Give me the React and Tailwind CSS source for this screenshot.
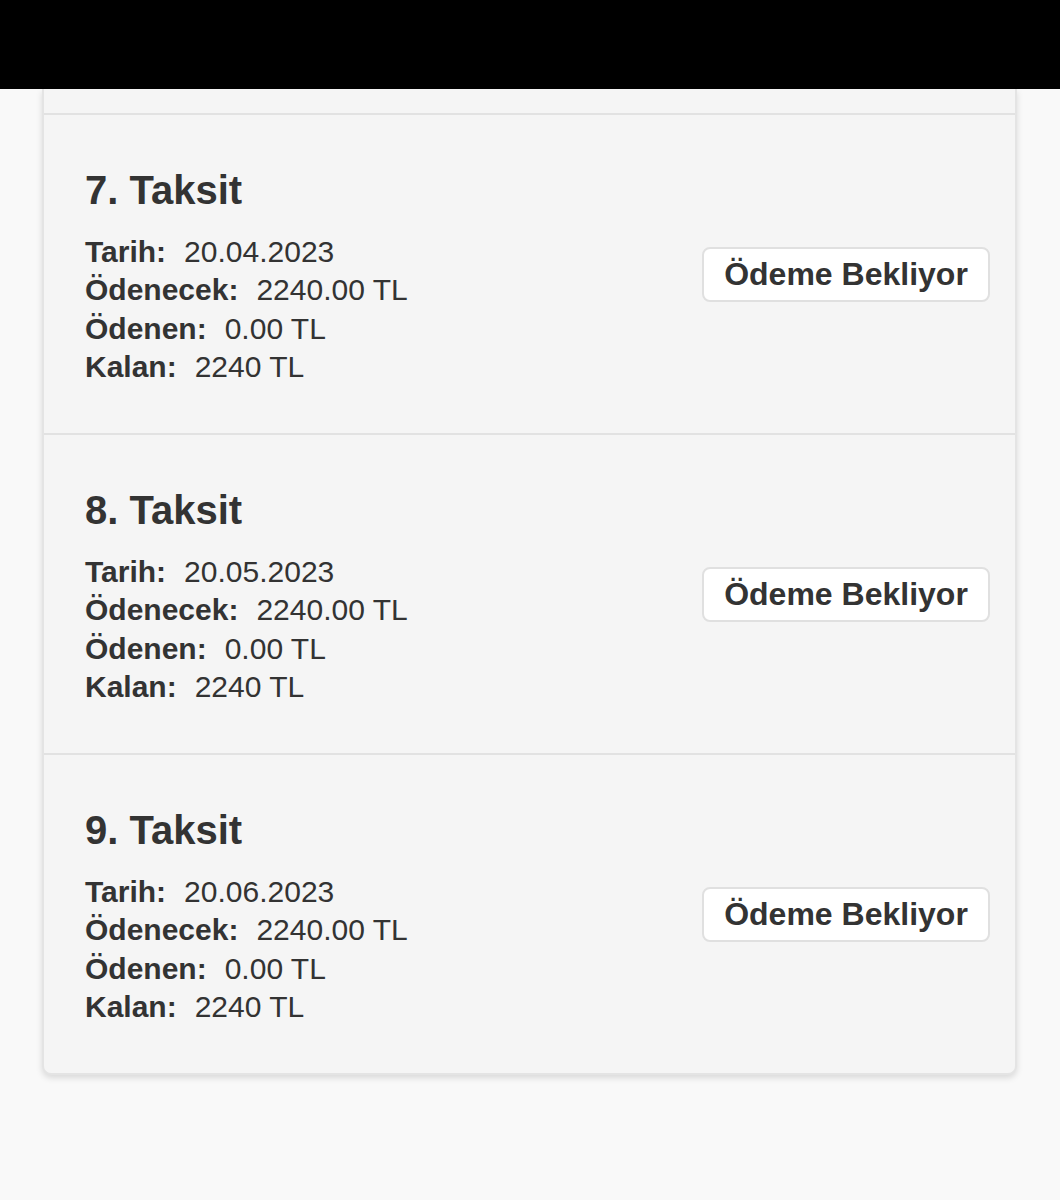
import React from "react";

const taksitler = [
  { no: 7, tarih: "20.04.2023" },
  { no: 8, tarih: "20.05.2023" },
  { no: 9, tarih: "20.06.2023" },
];

function Satir({ label, value }) {
  return (
    <div className="flex h-[38.3px] items-center">
      <span className="font-bold">{label}</span>
      <span className="ml-[18px]">{value}</span>
    </div>
  );
}

function TaksitRow({ no, tarih }) {
  return (
    <div className="flex h-[320px] items-center justify-between border-t-2 border-[#e2e2e2] pl-[41px] pr-[25px]">
      <div className="flex flex-col pt-[4px]">
        <h2 className="text-[40px] font-bold leading-[48px]">{no}. Taksit</h2>
        <div className="mt-[19px] text-[30px] leading-[38px]">
          <Satir label="Tarih:" value={tarih} />
          <Satir label="Ödenecek:" value="2240.00 TL" />
          <Satir label="Ödenen:" value="0.00 TL" />
          <Satir label="Kalan:" value="2240 TL" />
        </div>
      </div>
      <button className="flex h-[55px] w-[288px] items-center justify-center rounded-[8px] border-2 border-[#e0e0e0] bg-white text-[32px] font-bold text-[#333]">
        Ödeme Bekliyor
      </button>
    </div>
  );
}

export default function App() {
  return (
    <div
      className="min-h-[1200px] w-[1060px] bg-[#f9f9f9] text-[#333]"
      style={{ fontFamily: '"Liberation Sans", Arial, sans-serif' }}
    >
      <div className="h-[89px] bg-black" />
      <div className="ml-[42px] w-[975px] overflow-hidden rounded-b-[9px] border-x-2 border-b-2 border-[#e4e4e4] bg-[#f5f5f5] shadow-[0_3px_6px_rgba(0,0,0,0.13)]">
        <div className="h-[24px]" />
        {taksitler.map((t) => (
          <TaksitRow key={t.no} {...t} />
        ))}
      </div>
    </div>
  );
}
